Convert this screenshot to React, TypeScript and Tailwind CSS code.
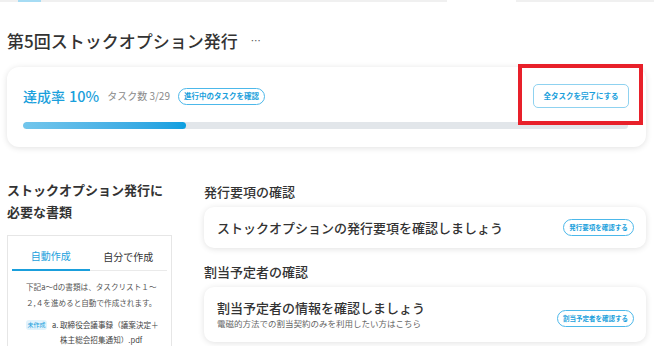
import React from 'react';

const font = { fontFamily: '"Noto Sans CJK JP", "Noto Sans", sans-serif' };

function Pill({ label, className = '' }: { label: string; className?: string }) {
  return (
    <span
      className={`inline-flex items-center justify-center rounded-full border border-[#4cb8ea] bg-white font-bold text-[#1a9fdc] ${className}`}
    >
      {label}
    </span>
  );
}

function ProgressCard() {
  return (
    <section className="relative h-[80px] rounded-[12px] bg-white px-[16px] pt-[17px] shadow-[0_1px_6px_rgba(0,0,0,0.12)]">
      <div className="flex h-[24px] items-center justify-between pr-[1px]">
        <div className="flex items-center">
          <span className="text-[14px] font-medium leading-none text-[#1a9fdc]">達成率</span>
          <span className="ml-[4px] text-[14.5px] font-medium leading-none text-[#1a9fdc]">10%</span>
          <span className="ml-[8px] text-[10px] leading-none text-[#8a8a8a]">タスク数 3/29</span>
          <Pill label="進行中のタスクを確認" className="ml-[8px] h-[17px] w-[87px] text-[7.5px]" />
        </div>
        <button className="flex h-[24px] w-[96px] items-center justify-center rounded-[5px] border border-[#8fd2f0] text-[7.5px] font-bold text-[#1a9fdc]">
          全タスクを完了にする
        </button>
      </div>
      <div className="mt-[14px] h-[7px] w-[605px] overflow-hidden rounded-full bg-[#e2e6ea]">
        <div className="h-full w-[163px] rounded-full bg-gradient-to-r from-[#72c6ec] to-[#0a9fe0]" />
      </div>
      {/* annotation overlay */}
      <div className="pointer-events-none absolute left-[511px] top-[-3px] h-[61px] w-[125px] border-[4px] border-[#e8202a]" />
    </section>
  );
}

function DocsPanel() {
  return (
    <div className="mt-[32px] w-[165px] shrink-0">
      <h2 className="text-[13px] font-bold leading-[22px] text-[#333]">
        ストックオプション発行に
        <br />
        必要な書類
      </h2>
      <div className="mt-[12px] h-[200px] border border-[#e6e6e6] px-[4px]">
        <div className="flex">
          <div className="flex h-[35px] w-[78px] items-center justify-center border-b-2 border-[#1a9fdc] pt-[6px] text-[10px] text-[#1a9fdc]">
            自動作成
          </div>
          <div className="flex h-[35px] w-[78px] items-center justify-center border-b border-[#eaeaea] pt-[6px] text-[10px] text-[#333]">
            自分で作成
          </div>
        </div>
        <div className="px-[14px]">
          <p className="mt-[8px] whitespace-nowrap text-[7.6px] leading-[16px] text-[#555]">
            下記a〜dの書類は、タスクリスト１〜
            <br />
            ２,４を進めると自動で作成されます。
          </p>
          <div className="mt-[6px] flex items-start text-[7.6px] leading-[15px] text-[#444]">
            <span className="mt-[2.5px] flex h-[10px] w-[21px] shrink-0 items-center justify-center whitespace-nowrap rounded-[3px] bg-[#e2f3fc] text-[6px] leading-none text-[#1a9fdc]">
              未作成
            </span>
            <span className="ml-[5px] w-[8px] shrink-0">a.</span>
            <span className="whitespace-nowrap">
              取締役会議事録（議案決定＋
              <br />
              株主総会招集通知）.pdf
            </span>
          </div>
        </div>
      </div>
    </div>
  );
}

function CheckSection({
  heading,
  title,
  sub,
  action,
  actionW,
}: {
  heading: string;
  title: string;
  sub?: string;
  action: string;
  actionW: string;
}) {
  return (
    <div>
      <h3 className="text-[13px] font-medium leading-[18px] text-[#333]">{heading}</h3>
      <div
        className={`mt-[6px] flex items-center justify-between rounded-[10px] bg-white pl-[13px] pr-[12px] shadow-[0_1px_6px_rgba(0,0,0,0.12)] ${
          sub ? 'h-[55px]' : 'h-[41px]'
        }`}
      >
        <div>
          <div className="text-[13px] font-medium leading-[18px] text-[#333]">{title}</div>
          {sub && <div className="text-[8.5px] leading-[13px] text-[#666]">{sub}</div>}
        </div>
        <Pill label={action} className={`h-[17px] text-[6.5px] ${actionW} ${sub ? 'mt-[8px]' : ''}`} />
      </div>
    </div>
  );
}

export default function App() {
  return (
    <div className="relative h-[346px] w-[654px] overflow-hidden bg-white" style={font}>
      <div className="flex h-[2px]">
        <div className="w-[18px] bg-[#f0f0f0]" />
        <div className="w-[23px] bg-[#a6dcf4]" />
        <div className="w-[406px] bg-[#f0f0f0]" />
        <div className="w-[69px] bg-white" />
        <div className="flex-1 bg-[#f0f0f0]" />
      </div>
      <div className="px-[7px]">
        <div className="mt-[27px] flex h-[24px] items-center">
          <h1 className="text-[17px] font-medium leading-[24px] text-[#333]">第5回ストックオプション発行</h1>
          <span className="ml-[13px] text-[10px] leading-none text-[#555]">…</span>
        </div>
        <div className="mt-[14px] w-[639px]">
          <ProgressCard />
        </div>
        <div className="flex gap-[32px]">
          <DocsPanel />
          <div className="mt-[36px] flex w-[442px] flex-col gap-[15px]">
            <CheckSection
              heading="発行要項の確認"
              title="ストックオプションの発行要項を確認しましょう"
              action="発行要項を確認する"
              actionW="w-[71px]"
            />
            <CheckSection
              heading="割当予定者の確認"
              title="割当予定者の情報を確認しましょう"
              sub="電磁的方法での割当契約のみを利用したい方はこちら"
              action="割当予定者を確認する"
              actionW="w-[77px]"
            />
          </div>
        </div>
      </div>
    </div>
  );
}
